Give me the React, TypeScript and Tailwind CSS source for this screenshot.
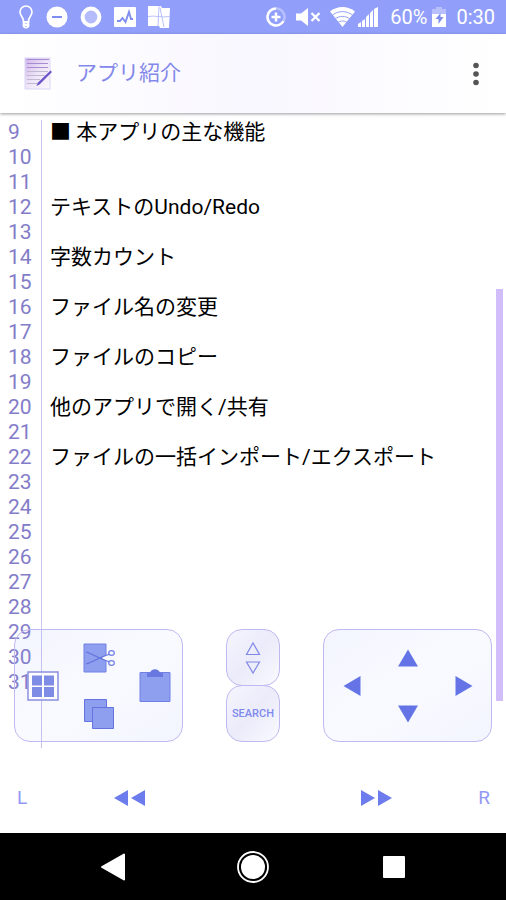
import React from "react";

const FIRST_LINE = 9;
const LINES = [
  "■ 本アプリの主な機能",
  "",
  "",
  "テキストのUndo/Redo",
  "",
  "字数カウント",
  "",
  "ファイル名の変更",
  "",
  "ファイルのコピー",
  "",
  "他のアプリで開く/共有",
  "",
  "ファイルの一括インポート/エクスポート",
];
const LINE_NUMBERS = Array.from({ length: 23 }, (_, i) => FIRST_LINE + i);

function StatusBar() {
  return (
    <div className="flex h-[34px] shrink-0 items-center justify-between bg-[#919ffa] pl-[18px] pr-[11px] text-white">
      <div className="flex items-center gap-3">
        <svg width="16" height="24" viewBox="0 0 16 24" fill="none" stroke="currentColor" aria-hidden="true">
          <path d="M5.500 16C5.500 12.500 2 11 2 7a6 6 0 0 1 12 0c0 4-3.500 5.500-3.500 9" strokeWidth="1.700" />
          <path d="M4.500 17h7M5 20h6" strokeWidth="2" />
          <circle cx="8" cy="20" r="2.600" strokeWidth="1.800" />
        </svg>
        <svg width="22" height="22" viewBox="0 0 22 22" aria-hidden="true">
          <circle cx="11" cy="11" r="10.500" fill="currentColor" />
          <path d="M6 11h10" stroke="#7f8df0" strokeWidth="2" />
        </svg>
        <svg width="22" height="22" viewBox="0 0 22 22" aria-hidden="true">
          <circle cx="11" cy="11" r="8.400" fill="#b4bcfb" stroke="currentColor" strokeWidth="4" />
        </svg>
        <svg width="22" height="20" viewBox="0 0 22 20" fill="none" aria-hidden="true">
          <rect width="22" height="20" rx="1" fill="currentColor" />
          <path d="M3 14h3l2.500-3 3 4L15 5l2 7h2" stroke="#7f8df0" strokeWidth="1.900" />
        </svg>
        <svg width="22" height="22" viewBox="0 0 22 22" fill="none" aria-hidden="true">
          <path d="M0 0h13l1 2h8l-1 20H12l-1-2H0z" fill="currentColor" />
          <path d="M11 0 10 20M0 10.500c7-1.500 13 1.500 22 0M12 2l4 19" stroke="#b9c1fc" strokeWidth="1" />
        </svg>
      </div>
      <div className="flex items-center">
        <svg width="20" height="20" viewBox="0 0 20 20" fill="none" stroke="currentColor" aria-hidden="true">
          <path d="M10 1.500a8.500 8.500 0 1 0 7.500 12.500" strokeWidth="2.600" />
          <path d="M10 1.500A8.500 8.500 0 0 1 17.500 14" strokeWidth="2.600" opacity=".35" />
          <path d="M10 5.500v9M5.500 10h9" strokeWidth="2.600" />
        </svg>
        <svg className="ml-[10px]" width="25" height="20" viewBox="0 0 25 20" aria-hidden="true">
          <path d="M0 6.500h5L12 1v18l-7-5.500H0z" fill="currentColor" />
          <path d="m15.500 6 8 8m0-8-8 8" stroke="currentColor" strokeWidth="2.400" />
        </svg>
        <svg className="ml-[9px]" width="25" height="20" viewBox="0 0 25 20" fill="none" aria-hidden="true">
          <path d="M0 4.500C7-1.500 18-1.500 25 4.500L12.500 20z" fill="currentColor" />
          <path d="M2.500 8c6-4.500 14-4.500 20 0M5 12c4.500-3.500 10.500-3.500 15 0M8 15.500c3-2 6-2 9 0" stroke="#919ffa" strokeWidth="1" />
        </svg>
        <svg className="ml-[3px]" width="20" height="20" viewBox="0 0 20 20" aria-hidden="true">
          <path d="M0 20v-3l3-2v5zM4 20v-6l3-2v8zM8 20V10l3-3v13zM12 20V6l3-3v17zM16 20V2l4-2v20z" fill="currentColor" />
        </svg>
        <span className="ml-3 text-[20px] leading-6">60%</span>
        <svg className="ml-[5px]" width="14" height="20" viewBox="0 0 14 20" aria-hidden="true">
          <path d="M4 0h6v2h4v5H0V2h4z" fill="currentColor" opacity=".35" />
          <path d="M0 7h14v13H0z" fill="currentColor" />
          <path d="M8.500 6 3.500 12h3v5l5-7h-3z" fill="#7f8df0" />
        </svg>
        <span className="ml-[10px] text-[20px] leading-6">0:30</span>
      </div>
    </div>
  );
}

function AppBar() {
  return (
    <header className="relative flex h-[79px] shrink-0 items-center bg-linear-to-r from-white via-[#f9f7ff] to-white pl-6 pr-2 shadow-[0_1px_3px_rgba(0,0,0,0.4)]">
      <svg width="28" height="34" viewBox="0 0 28 34" fill="none" aria-hidden="true">
        <defs>
          <linearGradient id="sheet" x1="0" y1="0" x2="1" y2="1">
            <stop offset="0" stopColor="#cfb2ea" />
            <stop offset=".5" stopColor="#eee6f8" />
            <stop offset="1" stopColor="#fbf9ff" />
          </linearGradient>
        </defs>
        <rect x="1" y="1" width="25" height="31" fill="url(#sheet)" stroke="#dcd5f8" />
        <path d="M3 2.500h22M3 6.500h21M3 10.500h21" stroke="#a98cd0" strokeWidth="1.200" />
        <path d="M3 14.500h21M3 18.500h18M3 22.500h13M3 26.500h10" stroke="#c2b8d2" strokeWidth="1.200" />
        <path d="m12.500 29 1-3L26.500 13.500l1.500 1.500L15.500 27.500z" fill="#6b55c8" />
      </svg>
      <h1 className="ml-6 flex-1 text-[21px] leading-[25px] text-[#8388ea]">アプリ紹介</h1>
      <button type="button" aria-label="メニュー" className="flex h-12 w-11 items-center justify-center text-[#555]">
        <svg width="6" height="24" viewBox="0 0 6 24" fill="currentColor">
          <circle cx="3" cy="3.500" r="2.800" />
          <circle cx="3" cy="12" r="2.800" />
          <circle cx="3" cy="20.500" r="2.800" />
        </svg>
      </button>
    </header>
  );
}

function PadButton({ label, tall = false, children }: { label: string; tall?: boolean; children: React.ReactNode }) {
  return (
    <button
      type="button"
      aria-label={label}
      className={`flex w-14 shrink-0 items-center justify-center ${tall ? "h-28" : "h-14"}`}
    >
      {children}
    </button>
  );
}

function Pad({ children }: { children: React.ReactNode }) {
  return (
    <div className="flex h-[113px] w-[169px] items-center justify-center rounded-2xl border border-[#c0b8f0] bg-linear-to-br from-[#8aa0ff]/10 via-[#8aa0ff]/5 to-[#8aa0ff]/10">
      {children}
    </div>
  );
}

function EditPad() {
  return (
    <Pad>
      <PadButton label="すべて選択" tall>
        <svg width="32" height="30" viewBox="0 0 32 30">
          <rect x="1" y="1" width="30" height="28" fill="#fff" fillOpacity=".7" stroke="#8a8ee0" strokeWidth="1.500" />
          <path d="M5 4.500h10v10H5zM17 4.500h10v10H17zM5 16h10v10H5zM17 16h10v10H17z" fill="#7f8ce6" />
        </svg>
      </PadButton>
      <div className="flex flex-col">
        <PadButton label="切り取り">
          <svg width="32" height="30" viewBox="0 0 32 30" fill="none">
            <path d="M1 1h22v28H1z" fill="#8f9ff0" stroke="#7080e4" />
            <path d="m19 15 5-3.500v7z" fill="#fafaff" />
            <path d="M3 9c7 2 14 7 24 10M3 21c7-2 14-7 24-10" stroke="#6272dc" strokeWidth="1.200" />
            <ellipse cx="28.500" cy="10" rx="2.800" ry="2.300" stroke="#7080e4" strokeWidth="1.200" />
            <ellipse cx="28.500" cy="20" rx="2.800" ry="2.300" stroke="#7080e4" strokeWidth="1.200" />
          </svg>
        </PadButton>
        <PadButton label="コピー">
          <svg width="30" height="30" viewBox="0 0 30 30" fill="#8f9ff0" stroke="#6474de">
            <path d="M.500.500h22v22h-22z" />
            <path d="M8.500 8.500h21v21h-21z" />
          </svg>
        </PadButton>
      </div>
      <PadButton label="貼り付け" tall>
        <svg width="32" height="36" viewBox="0 0 32 36">
          <path d="M1 4.500h30v29H1z" fill="#8f9ff0" stroke="#7080e4" />
          <path d="M8 9V5h3c1-5 9-5 10 0h3v4z" fill="#6878e0" />
        </svg>
      </PadButton>
    </Pad>
  );
}

function CursorPad() {
  return (
    <Pad>
      <PadButton label="左へ" tall>
        <svg width="18" height="20" viewBox="0 0 18 20" fill="#6474e6"><path d="M17.500 0v20L.500 10z" /></svg>
      </PadButton>
      <div className="flex flex-col">
        <PadButton label="上へ">
          <svg width="20" height="18" viewBox="0 0 20 18" fill="#6474e6"><path d="M0 17.500h20L10 .500z" /></svg>
        </PadButton>
        <PadButton label="下へ">
          <svg width="20" height="18" viewBox="0 0 20 18" fill="#6474e6"><path d="M0 .500h20L10 17.500z" /></svg>
        </PadButton>
      </div>
      <PadButton label="右へ" tall>
        <svg width="18" height="20" viewBox="0 0 18 20" fill="#6474e6"><path d="M.500 0v20l17-10z" /></svg>
      </PadButton>
    </Pad>
  );
}

const KEY =
  "flex h-[57px] w-[54px] items-center justify-center rounded-2xl border border-[#c0b8f0] bg-linear-to-br from-[#f6f6ff] via-[#ebebfa] to-[#fafaff] text-[11px] font-medium text-[#8089ec]";

function SearchKeys() {
  return (
    <div className="flex flex-col -space-y-px">
      <button type="button" aria-label="上下に検索" className={KEY}>
        <svg width="16" height="34" viewBox="0 0 16 34" fill="none" stroke="#8088e6" strokeWidth="1.200">
          <path d="M1.500 13.500h13L8 2z" />
          <path d="M1.500 21h13L8 32z" />
        </svg>
      </button>
      <button type="button" className={KEY}>SEARCH</button>
    </div>
  );
}

function Editor() {
  return (
    <main className="relative mb-[15px] flex flex-1 pt-[7px] text-[21px] leading-[25px]">
      <ol aria-hidden="true" className="w-[42px] shrink-0 border-r border-[#c9c4ee] pl-2 text-[#837cc8]">
        {LINE_NUMBERS.map((n) => (
          <li key={n}>{n}</li>
        ))}
      </ol>
      <textarea
        aria-label="本文"
        spellCheck={false}
        className="min-w-0 flex-1 resize-none overflow-hidden bg-transparent pl-2 text-black outline-none"
        defaultValue={LINES.join("\n")}
      />
      <div className="absolute right-[3px] bottom-[47px] h-[412px] w-[7px] bg-[#d0bdfa]" />
      <div className="absolute inset-x-0 bottom-[6px] flex items-end justify-between px-[14px]">
        <EditPad />
        <SearchKeys />
        <CursorPad />
      </div>
    </main>
  );
}

function MoveBar() {
  const button = "flex h-11 w-11 items-center justify-center";
  return (
    <div className="flex h-[70px] shrink-0 items-center justify-between text-[19px] leading-6 text-[#9298f4]">
      <div className="flex gap-16">
        <button type="button" className={button}>L</button>
        <button type="button" aria-label="先頭へ" className={button}>
          <svg width="32" height="16" viewBox="0 0 32 16" fill="#6c7cec"><path d="M14 0v16L0 8zM31 0v16L17 8z" /></svg>
        </button>
      </div>
      <div className="flex gap-16">
        <button type="button" aria-label="末尾へ" className={button}>
          <svg width="32" height="16" viewBox="0 0 32 16" fill="#6c7cec"><path d="M1 0v16l14-8zM18 0v16l14-8z" /></svg>
        </button>
        <button type="button" className={button}>R</button>
      </div>
    </div>
  );
}

function NavigationBar() {
  const button = "flex h-14 w-14 items-center justify-center text-white";
  return (
    <nav className="flex h-[67px] shrink-0 items-center justify-evenly bg-black">
      <button type="button" aria-label="戻る" className={button}>
        <svg width="26" height="28" viewBox="0 0 26 28" fill="currentColor" stroke="currentColor" strokeLinejoin="round" strokeWidth="2">
          <path d="M24 1.500v25L2 14z" />
        </svg>
      </button>
      <button type="button" aria-label="ホーム" className={button}>
        <svg width="34" height="34" viewBox="0 0 34 34">
          <circle cx="17" cy="17" r="15" fill="none" stroke="currentColor" strokeWidth="1.800" />
          <circle cx="17" cy="17" r="12" fill="currentColor" />
        </svg>
      </button>
      <button type="button" aria-label="履歴" className={button}>
        <svg width="22" height="22" viewBox="0 0 22 22"><rect width="22" height="22" rx="1" fill="currentColor" /></svg>
      </button>
    </nav>
  );
}

export default function App() {
  return (
    <div lang="ja" className="flex min-h-screen flex-col bg-white font-[Roboto,'Noto_Sans_CJK_JP',sans-serif]">
      <StatusBar />
      <AppBar />
      <Editor />
      <MoveBar />
      <NavigationBar />
    </div>
  );
}
